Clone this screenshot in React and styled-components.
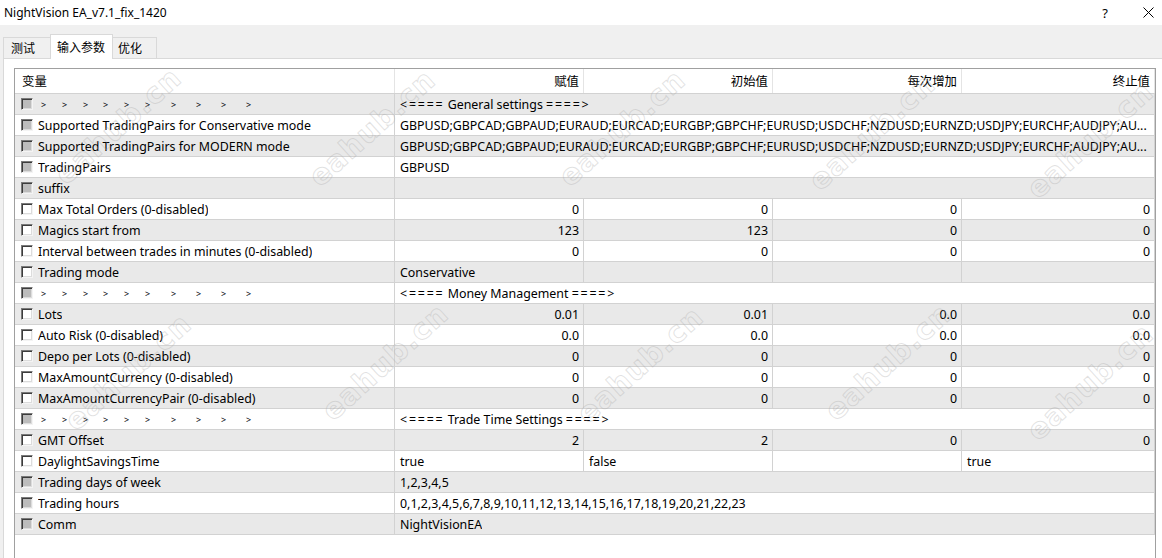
import React from "react";
import styled, { createGlobalStyle, css } from "styled-components";

const GlobalStyle = createGlobalStyle`
  html, body {
    margin: 0;
    padding: 0;
    background: #ffffff;
  }
  body {
    font-family: "Noto Sans", "Noto Sans CJK SC", sans-serif;
    font-size: 12.4px;
    color: #000;
  }
`;

const LINE = "#d2d2d2";
const HEAD_LINE = "#e4e4e4";
const STRIPE = "#e9e9e9";

const Window = styled.div`
  position: relative;
  width: 1162px;
  height: 558px;
  overflow: hidden;
  display: flex;
  flex-direction: column;
  background: #f0f0f0;
`;

const TitleBar = styled.div`
  height: 25px;
  flex: none;
  display: flex;
  align-items: center;
  background: #fff;
  padding-left: 4px;
  font-size: 12px;
`;

const Title = styled.span`
  flex: 1;
`;

const TitleButton = styled.div`
  width: ${(p) => p.$w}px;
  margin-right: ${(p) => p.$gap || 0}px;
  height: 25px;
  display: flex;
  align-items: center;
  justify-content: center;
  font-size: 13px;
`;

const TabStrip = styled.div`
  height: 33px;
  flex: none;
  display: flex;
  align-items: flex-end;
  padding-left: 3px;
  font-size: 12px;
`;

const Tab = styled.div`
  width: ${(p) => p.$w}px;
  height: 21px;
  box-sizing: border-box;
  padding-left: ${(p) => p.$pad}px;
  display: flex;
  align-items: center;
  border: 1px solid #d9d9d9;
  border-bottom: none;
  background: #f0f0f0;
  margin-right: -1px;
  ${(p) =>
    p.$active &&
    css`
      height: 25px;
      background: #fff;
      margin-bottom: -1px;
      padding-bottom: 1px;
      position: relative;
      z-index: 1;
    `}
`;

const Panel = styled.div`
  flex: 1;
  margin-left: 3px;
  border-left: 1px solid #d9d9d9;
  border-top: 1px solid #d9d9d9;
  background: #fff;
  padding: 9px 6px 0 10px;
  display: flex;
`;

const Grid = styled.div`
  flex: 1;
  border: 1px solid #a0a0a0;
  border-bottom: none;
  display: flex;
  flex-direction: column;
`;

const Row = styled.div`
  display: grid;
  grid-template-columns: 380px 189px 189px 189px 1fr;
  height: ${(p) => (p.$head ? 25 : 21)}px;
  box-sizing: border-box;
  border-bottom: 1px solid ${LINE};
  background: ${(p) => (p.$stripe ? STRIPE : "#fff")};
`;

const Cell = styled.div`
  display: flex;
  align-items: center;
  box-sizing: border-box;
  min-width: 0;
  overflow: hidden;
  white-space: nowrap;
  border-right: 1px solid ${(p) => (p.$head ? HEAD_LINE : LINE)};
  justify-content: ${(p) => (p.$right ? "flex-end" : "flex-start")};
  padding: ${(p) => (p.$right ? "0 4px 0 0" : "0 0 0 5px")};
  ${(p) =>
    p.$span &&
    css`
      grid-column: 2 / -1;
    `}
`;

const NameCell = styled(Cell)`
  padding-left: 6px;
  gap: 5px;
`;

const HeadName = styled(Cell)`
  padding-left: 7px;
`;

const Clip = styled.span`
  overflow: hidden;
  text-overflow: ellipsis;
`;

const Box = styled.span`
  flex: none;
  width: 12px;
  height: 12px;
  box-sizing: border-box;
  border: 1px solid;
  border-color: #7a7a7a #f4f4f4 #f4f4f4 #7a7a7a;
  box-shadow: inset 1px 1px 0 #3c3c3c, inset -1px -1px 0 #dcdcdc;
  background: ${(p) => (p.$locked ? "#bcbcbc" : "#fff")};
`;

const Arrows = styled.span`
  display: flex;
  font-size: 9px;
  padding-left: 3px;
`;

const Arrow = styled.span`
  width: ${(p) => p.$w}px;
`;

/* section header text: the <==== / ====> fences are drawn wider */
const SectionTitle = styled.span`
  white-space: pre;
`;

const Fence = styled.span`
  letter-spacing: 1.8px;
  margin-right: ${(p) => (p.$end ? -1.8 : 0)}px;
`;

const WatermarkLayer = styled.div`
  position: absolute;
  inset: 0;
  pointer-events: none;
  z-index: 5;
`;

const Mark = styled.span`
  position: absolute;
  left: ${(p) => p.$x}px;
  top: ${(p) => p.$y}px;
  transform: translate(-50%, -50%) rotate(-42deg);
  font-family: "DejaVu Sans", sans-serif;
  font-weight: bold;
  font-size: 29px;
  letter-spacing: 1px;
  color: transparent;
  -webkit-text-stroke: 1px rgba(170, 170, 170, 0.34);
  white-space: nowrap;
`;

const PAIRS =
  "GBPUSD;GBPCAD;GBPAUD;EURAUD;EURCAD;EURGBP;GBPCHF;EURUSD;USDCHF;NZDUSD;EURNZD;USDJPY;EURCHF;AUDJPY;AU...";

const rows = [
  { sep: "General settings" },
  { name: "Supported TradingPairs for Conservative mode", locked: true, text: PAIRS },
  { name: "Supported TradingPairs for MODERN mode", locked: true, text: PAIRS },
  { name: "TradingPairs", locked: true, text: "GBPUSD" },
  { name: "suffix", locked: true, text: "" },
  { name: "Max Total Orders (0-disabled)", num: ["0", "0", "0", "0"] },
  { name: "Magics start from", num: ["123", "123", "0", "0"] },
  { name: "Interval between trades in minutes (0-disabled)", num: ["0", "0", "0", "0"] },
  { name: "Trading mode", cells: ["Conservative", "", "", ""] },
  { sep: "Money Management" },
  { name: "Lots", num: ["0.01", "0.01", "0.0", "0.0"] },
  { name: "Auto Risk (0-disabled)", num: ["0.0", "0.0", "0.0", "0.0"] },
  { name: "Depo per Lots (0-disabled)", num: ["0", "0", "0", "0"] },
  { name: "MaxAmountCurrency (0-disabled)", num: ["0", "0", "0", "0"] },
  { name: "MaxAmountCurrencyPair (0-disabled)", num: ["0", "0", "0", "0"] },
  { sep: "Trade Time Settings" },
  { name: "GMT Offset", num: ["2", "2", "0", "0"] },
  { name: "DaylightSavingsTime", cells: ["true", "false", "", "true"] },
  { name: "Trading days of week", locked: true, text: "1,2,3,4,5" },
  {
    name: "Trading hours",
    locked: true,
    text: "0,1,2,3,4,5,6,7,8,9,10,11,12,13,14,15,16,17,18,19,20,21,22,23",
  },
  { name: "Comm", locked: true, text: "NightVisionEA" },
];

const arrowSteps = [21, 21, 20, 21, 21, 26, 25, 25, 25, 25];

const marks = [
  [118, 126], [372, 128], [622, 128], [872, 132], [1090, 140],
  [128, 372], [385, 362], [640, 365], [888, 362], [1090, 382],
];

function ParamRow({ row, stripe }) {
  if (row.sep) {
    return (
      <Row $stripe={stripe}>
        <NameCell>
          <Box $locked />
          <Arrows>
            {arrowSteps.map((w, i) => (
              <Arrow key={i} $w={w}>
                &gt;
              </Arrow>
            ))}
          </Arrows>
        </NameCell>
        <Cell $span>
          <SectionTitle>
            <Fence>{"<===="}</Fence>
            {" " + row.sep + " "}
            <Fence $end>{"====>"}</Fence>
          </SectionTitle>
        </Cell>
      </Row>
    );
  }
  return (
    <Row $stripe={stripe}>
      <NameCell>
        <Box $locked={row.locked} />
        <Clip>{row.name}</Clip>
      </NameCell>
      {row.text !== undefined && (
        <Cell $span>
          <Clip>{row.text}</Clip>
        </Cell>
      )}
      {row.num &&
        row.num.map((v, i) => (
          <Cell key={i} $right>
            {v}
          </Cell>
        ))}
      {row.cells && row.cells.map((v, i) => <Cell key={i}>{v}</Cell>)}
    </Row>
  );
}

export default function App() {
  return (
    <>
      <GlobalStyle />
      <Window>
        <TitleBar>
          <Title>NightVision EA_v7.1_fix_1420</Title>
          <TitleButton $w={30} $gap={14}>
            ?
          </TitleButton>
          <TitleButton $w={28}>
            <svg width="11" height="11" viewBox="0 0 11 11">
              <path d="M0.5 0.5 L10.5 10.5 M10.5 0.5 L0.5 10.5" stroke="#000" strokeWidth="1" />
            </svg>
          </TitleButton>
        </TitleBar>
        <TabStrip>
          <Tab $w={48} $pad={7}>
            测试
          </Tab>
          <Tab $w={63} $pad={6} $active>
            输入参数
          </Tab>
          <Tab $w={45} $pad={5}>
            优化
          </Tab>
        </TabStrip>
        <Panel>
          <Grid>
            <Row $head>
              <HeadName $head>变量</HeadName>
              <Cell $head $right>赋值</Cell>
              <Cell $head $right>初始值</Cell>
              <Cell $head $right>每次增加</Cell>
              <Cell $head $right>终止值</Cell>
            </Row>
            {rows.map((r, i) => (
              <ParamRow key={i} row={r} stripe={i % 2 === 0} />
            ))}
          </Grid>
        </Panel>
        <WatermarkLayer>
          {marks.map(([x, y], i) => (
            <Mark key={i} $x={x} $y={y}>
              eahub.cn
            </Mark>
          ))}
        </WatermarkLayer>
      </Window>
    </>
  );
}
